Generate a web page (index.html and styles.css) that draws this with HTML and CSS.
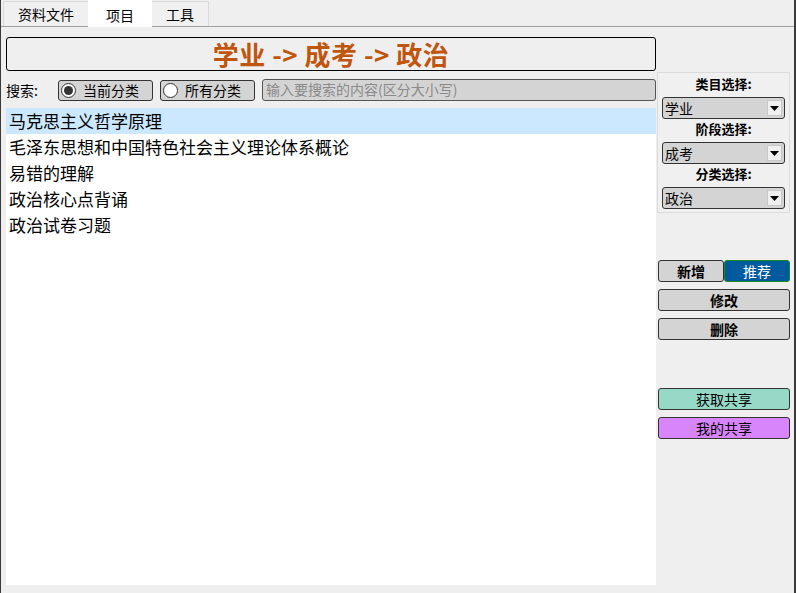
FILE: index.html
```html
<!DOCTYPE html>
<html>
<head>
<meta charset="utf-8">
<link rel="stylesheet" href="styles.css">
</head>
<body>
<div class="window">
  <div class="tabbar">
    <div class="tab">资料文件</div>
    <div class="tab active">项目</div>
    <div class="tab">工具</div>
  </div>
  <div class="main">
    <div class="leftcol">
      <div class="titlebox">学业 -&gt; 成考 -&gt; 政治</div>
      <div class="searchrow">
        <span class="searchlabel">搜索:</span>
        <div class="radio"><span class="dot checked"></span><span>当前分类</span></div>
        <div class="radio"><span class="dot"></span><span>所有分类</span></div>
        <div class="searchinput">输入要搜索的内容(区分大小写)</div>
      </div>
      <div class="list">
        <div class="item selected">马克思主义哲学原理</div>
        <div class="item">毛泽东思想和中国特色社会主义理论体系概论</div>
        <div class="item">易错的理解</div>
        <div class="item">政治核心点背诵</div>
        <div class="item">政治试卷习题</div>
      </div>
    </div>
    <div class="rightcol">
      <div class="panel">
        <div class="plabel">类目选择:</div>
        <div class="select"><span>学业</span><span class="arrow"><svg width="9" height="5" viewBox="0 0 9 5"><path d="M0 0h9L4.5 5z" fill="#000"/></svg></span></div>
        <div class="plabel">阶段选择:</div>
        <div class="select"><span>成考</span><span class="arrow"><svg width="9" height="5" viewBox="0 0 9 5"><path d="M0 0h9L4.5 5z" fill="#000"/></svg></span></div>
        <div class="plabel">分类选择:</div>
        <div class="select"><span>政治</span><span class="arrow"><svg width="9" height="5" viewBox="0 0 9 5"><path d="M0 0h9L4.5 5z" fill="#000"/></svg></span></div>
      </div>
      <div class="btnrow">
        <div class="btn bold half">新增</div>
        <div class="btn blue half">推荐</div>
      </div>
      <div class="btn bold full">修改</div>
      <div class="btn bold full">删除</div>
      <div class="btn teal full share1">获取共享</div>
      <div class="btn purple full">我的共享</div>
    </div>
  </div>
</div>
</body>
</html>
```
FILE: styles.css
```css
* { box-sizing: border-box; }
html, body { margin: 0; padding: 0; }
body {
  width: 796px;
  height: 593px;
  background: #efefef;
  font-family: "Noto Sans CJK SC", "Noto Sans", sans-serif;
  color: #000;
  overflow: hidden;
}
.window {
  width: 796px;
  height: 593px;
  border-left: 1px solid #3a3a3a;
  border-right: 2px solid #3a3a3a;
  display: flex;
  flex-direction: column;
}
.tabbar {
  height: 27px;
  display: flex;
  align-items: flex-end;
  padding-left: 2px;
  border-bottom: 1px solid #a0a0a0;
  background: #efefef;
}
.tab {
  height: 25px;
  padding: 0 14px;
  font-size: 14px;
  line-height: 24px;
  border: 1px solid #d9d9d9;
  border-bottom: none;
  background: #f0f0f0;
  margin-right: -1px;
}
.tab.active {
  height: 27px;
  background: #fff;
  border-color: #fff;
  padding: 0 17px;
  line-height: 28px;
  position: relative;
  top: 1px;
}
.main {
  flex: 1;
  display: flex;
  padding: 10px 4px 8px 5px;
}
.leftcol {
  width: 651px;
  display: flex;
  flex-direction: column;
}
.titlebox {
  height: 34px;
  border: 1px solid #000;
  border-radius: 3px;
  text-align: center;
  font-size: 26px;
  font-weight: bold;
  line-height: 31px;
  color: #c0560e;
  letter-spacing: 0.5px;
}
.searchrow {
  margin-top: 8px;
  height: 22px;
  display: flex;
  align-items: center;
}
.searchlabel {
  font-size: 14px;
  width: 52px;
}
.radio {
  width: 95px;
  height: 21px;
  border: 1px solid #333;
  border-radius: 3px;
  background: #d4d4d4;
  display: flex;
  align-items: center;
  font-size: 14px;
  margin-right: 7px;
  padding-left: 2px;
}
.dot {
  width: 15px;
  height: 15px;
  border-radius: 50%;
  border: 1px solid #333;
  background: #fff;
  margin-right: 7px;
  position: relative;
}
.dot.checked::after {
  content: "";
  position: absolute;
  left: 2px;
  top: 2px;
  width: 9px;
  height: 9px;
  border-radius: 50%;
  background: #333;
}
.searchinput {
  flex: 1;
  height: 22px;
  border: 1px solid #555;
  border-radius: 3px;
  background: #d4d4d4;
  font-size: 14px;
  line-height: 19px;
  color: #8a8a8a;
  padding-left: 3px;
}
.list {
  margin-top: 7px;
  flex: 1;
  background: #fff;
}
.item {
  height: 26px;
  font-size: 17px;
  line-height: 26px;
  padding-left: 3px;
}
.item.selected { background: #cce8ff; }
.rightcol {
  width: 133px;
  margin-left: 1px;
  display: flex;
  flex-direction: column;
}
.panel {
  margin-top: 35px;
  height: 141px;
  border: 1px solid #dcdcdc;
  background: #f0f0f0;
  padding: 1px 4px 0 4px;
}
.plabel {
  text-align: center;
  font-size: 13px;
  font-weight: bold;
  line-height: 20px;
  height: 23px;
  padding-top: 0;
}
.select {
  height: 22px;
  border: 1px solid #333;
  border-radius: 3px;
  background: #d4d4d4;
  display: flex;
  justify-content: space-between;
  align-items: center;
  font-size: 14px;
  padding-left: 2px;
  padding-right: 2px;
}
.arrow {
  width: 15px;
  height: 16px;
  background: #f0f0f0;
  border: 1px solid #c8c8c8;
  display: flex;
  align-items: center;
  justify-content: center;
}
.btnrow {
  margin-top: 47px;
  display: flex;
  margin-left: 1px;
}
.btn {
  height: 22px;
  border: 1px solid #333;
  border-radius: 3px;
  background: #d4d4d4;
  text-align: center;
  font-size: 14px;
  line-height: 20px;
}
.btn.bold { font-weight: bold; font-size: 14px; }
.half { width: 66px; }
.btn.blue {
  background: #005a9e;
  border-color: #1a8a1a;
  color: #fff;
  width: 66px;
}
.full { margin-left: 1px; margin-top: 7px; width: 132px; }
.share1 { margin-top: 48px; }
.teal { background: #97d9c7; }
.purple { background: #d885fb; }
```
